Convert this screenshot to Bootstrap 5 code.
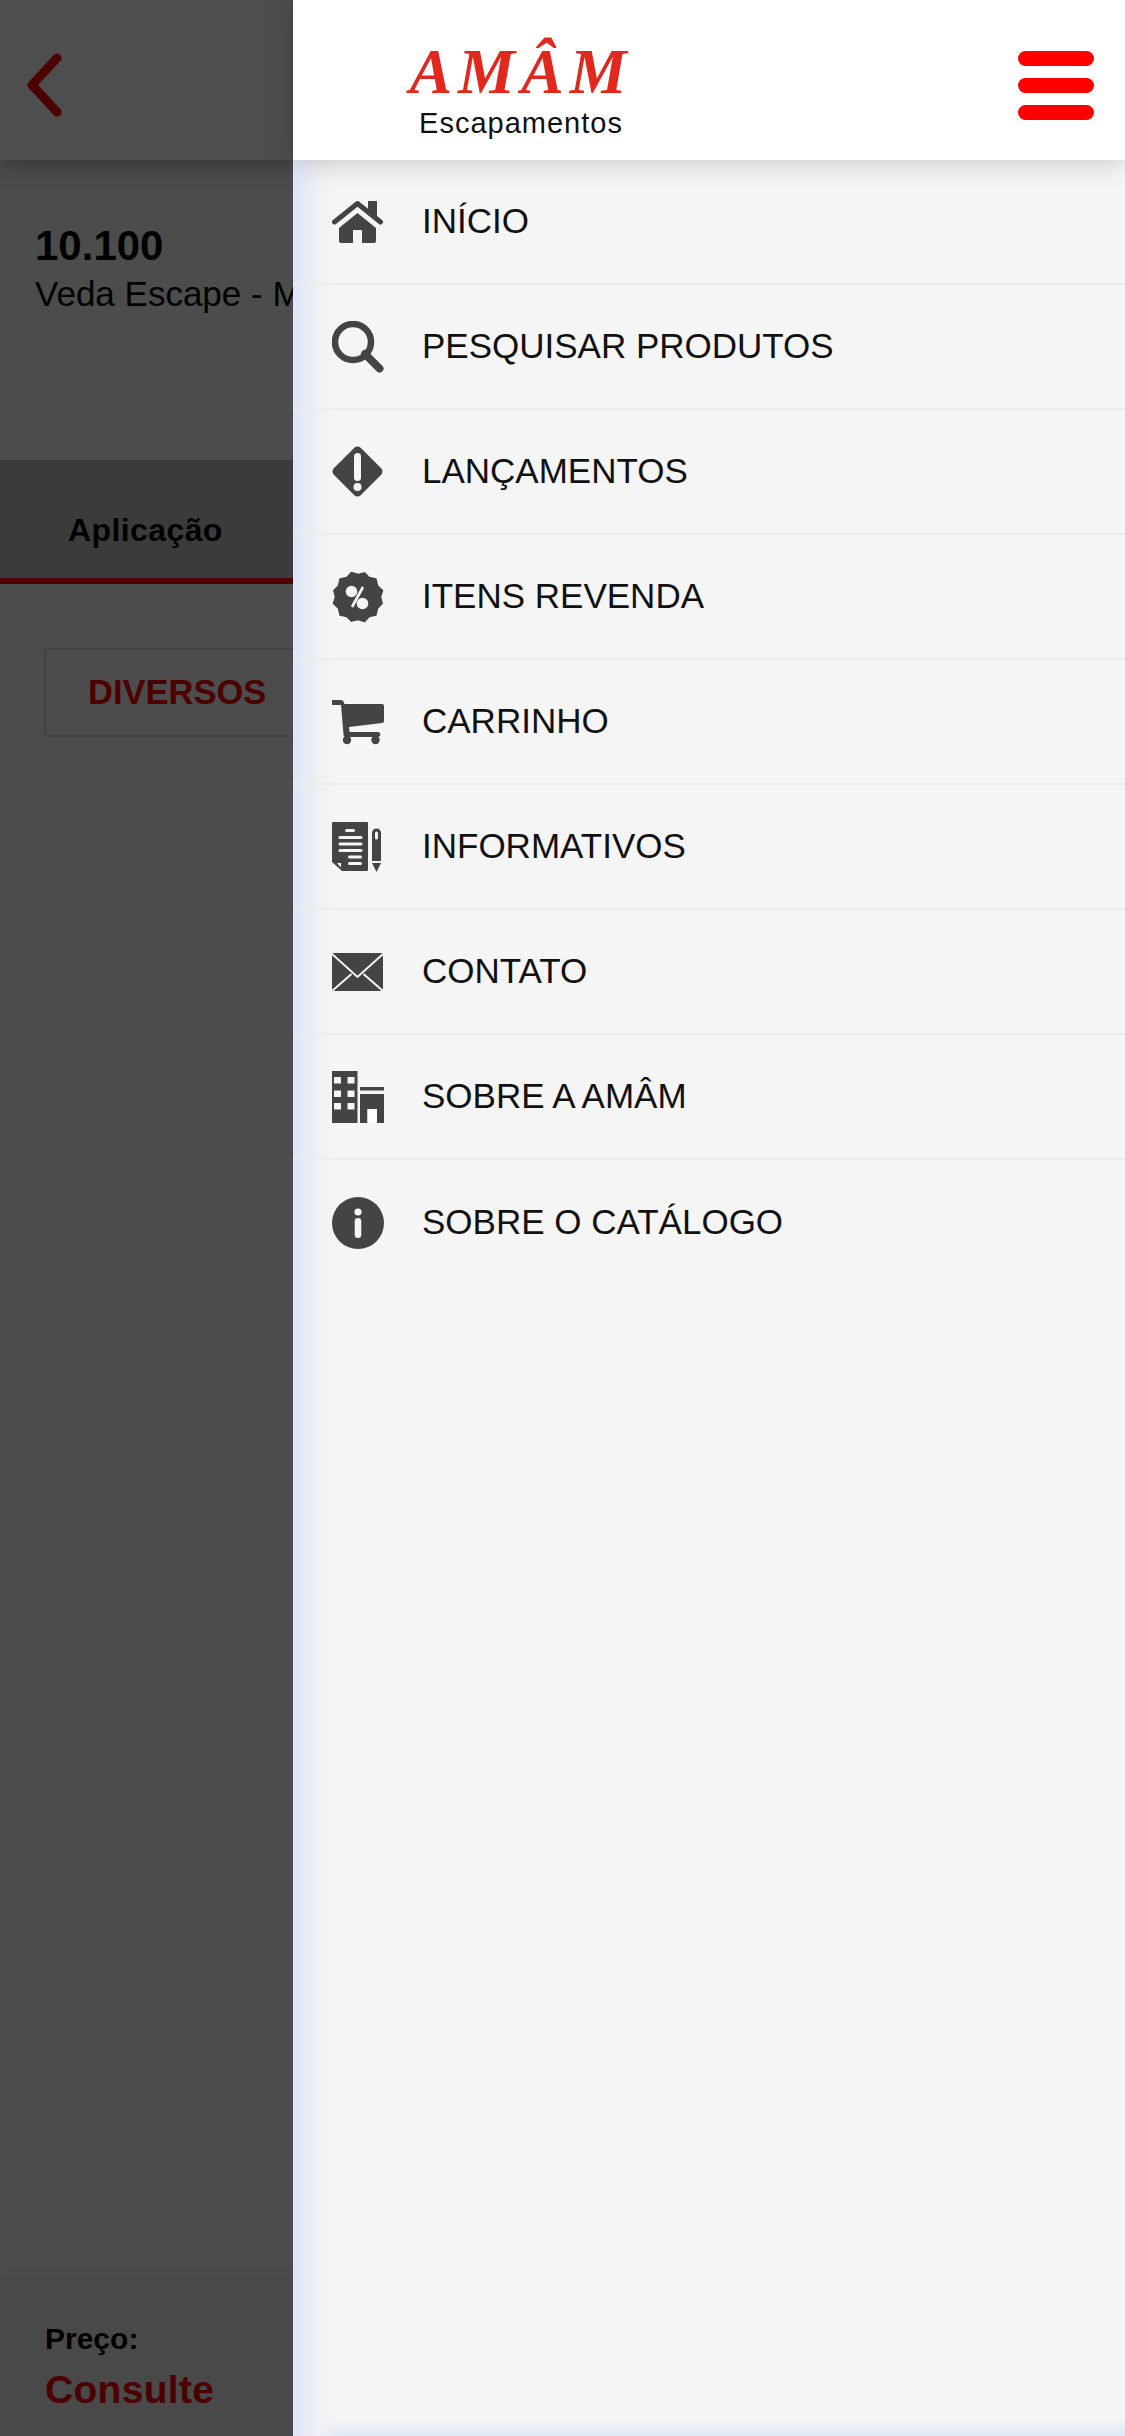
<!DOCTYPE html>
<html lang="pt-BR">

<head>
    <meta charset="UTF-8">
    <title>Amâm Escapamentos</title>
    <meta name="viewport" content="width=device-width, initial-scale=1.0">
    <link href="https://cdn.jsdelivr.net/npm/bootstrap@5.3.2/dist/css/bootstrap.min.css" rel="stylesheet">
    <style>
        body {
            font-family: "Liberation Sans", Arial, sans-serif;
            background-color: #4c4c4c;
            width: 1125px;
            height: 2436px;
            overflow: hidden;
        }

        .page-behind {
            width: 293px;
            height: 2436px;
            background-color: #4c4c4c;
            color: #000;
        }

        .behind-top {
            height: 160px;
            padding: 10px 0 0 26px;
            background-color: #4e4e4e;
            box-shadow: 0 6px 18px rgba(0, 0, 0, .25);
        }

        .product-info {
            height: 300px;
            padding: 64px 0 0 35px;
            white-space: nowrap;
        }

        .product-code {
            font-size: 42px;
            line-height: 44px;
            font-weight: 700;
        }

        .product-name {
            font-size: 35px;
            line-height: 52px;
        }

        .tab-bar {
            height: 124px;
            padding: 22px 0 0 68px;
            background-color: #3b3b3b;
            border-bottom: 6px solid #4d0000;
            font-size: 32px;
            font-weight: 700;
            letter-spacing: .4px;
            white-space: nowrap;
        }

        .chip-wrap {
            padding: 64px 0 0 44px;
        }

        .group-chip {
            width: 400px;
            height: 89px;
            padding-left: 42px;
            border: 2px solid #434343;
            color: #4d0000;
            font-size: 34.5px;
            font-weight: 700;
        }

        .price-bar {
            height: 153px;
            padding: 38px 0 0 45px;
            background-color: #494949;
            box-shadow: 0 -4px 12px rgba(0, 0, 0, .06);
        }

        .price-label {
            font-size: 30px;
            line-height: 36px;
            font-weight: 700;
        }

        .price-value {
            font-size: 39px;
            line-height: 66px;
            font-weight: 700;
            letter-spacing: .3px;
            color: #4d0000;
        }

        .side-drawer {
            width: 832px;
            height: 2436px;
        }

        .drawer-top {
            height: 160px;
            padding: 11px 31px 0 114px;
            background-color: #fff;
            box-shadow: 0 2px 26px rgba(0, 0, 0, .2);
            z-index: 2;
        }

        .brand-box {
            width: 228px;
            margin-top: 4px;
            text-align: center;
        }

        .brand-name {
            font-family: "Liberation Serif", "Times New Roman", serif;
            font-style: italic;
            font-weight: 700;
            font-size: 64px;
            line-height: 71px;
            letter-spacing: 6px;
            color: #e0281e;
        }

        .brand-sub {
            font-size: 29px;
            line-height: 32px;
            letter-spacing: 1px;
            color: #111;
        }

        .menu-toggle {
            width: 76px;
            gap: 12px;
        }

        .menu-toggle span {
            height: 15px;
            border-radius: 8px;
            background-color: #f00;
        }

        .drawer-body {
            background:
                linear-gradient(to right, #dee5f6, #f0f1f4 26px, rgba(245, 245, 245, 0) 44px),
                linear-gradient(to top, #e1e8f6, rgba(245, 245, 245, 0) 18px),
                #f5f5f5;
        }

        .drawer-list {
            --bs-list-group-bg: transparent;
        }

        .drawer-list .list-group-item {
            height: 125px;
            padding: 0 0 0 39px;
            gap: 38px;
            border-bottom: 2px solid #ececec;
            color: #111;
            font-size: 35px;
        }

        .menu-icon {
            flex: none;
            width: 52px;
            height: 52px;
            fill: #444;
        }
    </style>
</head>

<body>
    <div class="d-flex">
        <div class="page-behind d-flex flex-column flex-shrink-0 overflow-hidden">
            <div class="behind-top d-flex align-items-center">
                <svg width="38" height="66" viewBox="0 0 38 66">
                    <path d="M31 6 6 33l25 27" fill="none" stroke="#4d0000" stroke-width="9" stroke-linecap="round" stroke-linejoin="round"/>
                </svg>
            </div>
            <div class="product-info">
                <div class="product-code">10.100</div>
                <div class="product-name">Veda Escape - Massa</div>
            </div>
            <div class="tab-bar d-flex align-items-center">Aplicação</div>
            <div class="chip-wrap">
                <div class="group-chip d-flex align-items-center">DIVERSOS</div>
            </div>
            <div class="price-bar mt-auto">
                <div class="price-label">Preço:</div>
                <div class="price-value">Consulte</div>
            </div>
        </div>

        <div class="side-drawer d-flex flex-column">
            <div class="drawer-top d-flex align-items-center justify-content-between position-relative">
                <div class="brand-box">
                    <div class="brand-name">AMÂM</div>
                    <div class="brand-sub">Escapamentos</div>
                </div>
                <div class="menu-toggle d-flex flex-column">
                    <span></span>
                    <span></span>
                    <span></span>
                </div>
            </div>

            <div class="drawer-body flex-grow-1">
                <div class="list-group list-group-flush drawer-list">
                    <a href="#" class="list-group-item d-flex align-items-center">
                        <svg class="menu-icon" viewBox="0 0 52 52">
                            <path d="M36 5h9v18l-9-7z"/>
                            <path d="M25.500 17 44 32v13a2 2 0 0 1-2 2H30V34h-9v13H9a2 2 0 0 1-2-2V32z"/>
                            <path d="M2.500 26 25.500 7.500 48.500 26" fill="none" stroke="#444" stroke-width="5" stroke-linecap="round" stroke-linejoin="round"/>
                        </svg>
                        <span>INÍCIO</span>
                    </a>
                    <a href="#" class="list-group-item d-flex align-items-center">
                        <svg class="menu-icon" viewBox="0 0 52 52">
                            <circle cx="21" cy="21" r="18" fill="none" stroke="#444" stroke-width="6.500"/>
                            <path d="M33 33 47.500 47.500" stroke="#444" stroke-width="8" stroke-linecap="round"/>
                        </svg>
                        <span>PESQUISAR PRODUTOS</span>
                    </a>
                    <a href="#" class="list-group-item d-flex align-items-center">
                        <svg class="menu-icon" viewBox="0 0 52 52">
                            <path d="M25.500 5 46 25.500 25.500 46 5 25.500z" stroke="#444" stroke-width="9" stroke-linejoin="round"/>
                            <rect x="22" y="7" width="7" height="28" rx="3.500" fill="#f5f5f5"/>
                            <circle cx="25.500" cy="41" r="4" fill="#f5f5f5"/>
                        </svg>
                        <span>LANÇAMENTOS</span>
                    </a>
                    <a href="#" class="list-group-item d-flex align-items-center">
                        <svg class="menu-icon" viewBox="0 0 52 52">
                            <polygon transform="rotate(15 26 26)" stroke="#444" stroke-width="1.500" stroke-linejoin="round" points="51,26 47.700,31.800 48,38.700 41.900,41.900 38.700,48 31.800,47.700 26,51 20.200,47.700 13.300,48 10.100,41.900 4,38.700 4.300,31.800 1,26 4.300,20.200 4,13.300 10.100,10.100 13.300,4 20.200,4.300 26,1 31.800,4.300 38.700,4 41.900,10.100 48,13.300 47.700,20.200"/>
                            <circle cx="19.500" cy="20.500" r="5.800" fill="#f5f5f5"/>
                            <circle cx="30.500" cy="32.500" r="5.800" fill="#f5f5f5"/>
                            <path d="M31 16 20 36" stroke="#f5f5f5" stroke-width="2.600"/>
                        </svg>
                        <span>ITENS REVENDA</span>
                    </a>
                    <a href="#" class="list-group-item d-flex align-items-center">
                        <svg class="menu-icon" viewBox="0 0 52 52">
                            <path d="M1.500 4H9a3 3 0 0 1 3 2.500l.4 1.500H50a2 2 0 0 1 2 2v15a2 2 0 0 1-2 2L17 31l.6 5H46a2.500 2.500 0 0 1 0 5H14a2.500 2.500 0 0 1-2.500-2.500L9 9H1.500a2.500 2.500 0 0 1 0-5z"/>
                            <circle cx="15" cy="44" r="4.200"/>
                            <circle cx="43.500" cy="44" r="4.200"/>
                        </svg>
                        <span>CARRINHO</span>
                    </a>
                    <a href="#" class="list-group-item d-flex align-items-center">
                        <svg class="menu-icon" viewBox="0 0 52 52">
                            <path d="M1 1h34a1 1 0 0 1 1 1v47a1 1 0 0 1-1 1H10L0 41V2a1 1 0 0 1 1-1z"/>
                            <g fill="#f5f5f5">
                                <rect x="13" y="8" width="10" height="3" rx="1.500"/>
                                <rect x="6.500" y="15" width="24" height="3" rx="1.500"/>
                                <rect x="6.500" y="21.500" width="24" height="3" rx="1.500"/>
                                <rect x="6.500" y="28" width="24" height="3" rx="1.500"/>
                                <rect x="16" y="34.500" width="14" height="3" rx="1.500"/>
                                <rect x="16" y="41" width="14" height="3" rx="1.500"/>
                                <path d="M5 42h4v4.500z"/>
                            </g>
                            <path d="M40 12a4.500 4.500 0 0 1 9 0v28h-9z"/>
                            <rect x="43" y="10.500" width="3" height="8" rx="1.500" fill="#f5f5f5"/>
                            <path d="M40 42h9l-4.500 9z"/>
                        </svg>
                        <span>INFORMATIVOS</span>
                    </a>
                    <a href="#" class="list-group-item d-flex align-items-center">
                        <svg class="menu-icon" viewBox="0 0 52 52">
                            <rect x="0" y="7" width="51" height="38" rx="1.500"/>
                            <path d="M0 8 25.500 31 51 8M0 45l19.500-17M51 45 31.500 28" fill="none" stroke="#f5f5f5" stroke-width="2"/>
                        </svg>
                        <span>CONTATO</span>
                    </a>
                    <a href="#" class="list-group-item d-flex align-items-center">
                        <svg class="menu-icon" viewBox="0 0 52 52">
                            <path d="M0 0h25.500v52H0z"/>
                            <g fill="#f5f5f5">
                                <rect x="2" y="6" width="7" height="6.500"/>
                                <rect x="15.500" y="6" width="7" height="6.500"/>
                                <rect x="2" y="19.500" width="7" height="6.500"/>
                                <rect x="15.500" y="19.500" width="7" height="6.500"/>
                                <rect x="2" y="32" width="7" height="6.500"/>
                                <rect x="15.500" y="32" width="7" height="6.500"/>
                            </g>
                            <rect x="28" y="16" width="24" height="3.500"/>
                            <path d="M28 23h24v29h-7V38h-9.500v14H28z"/>
                            <rect x="35.500" y="38" width="9.500" height="14" fill="#fff"/>
                        </svg>
                        <span>SOBRE A AMÂM</span>
                    </a>
                    <a href="#" class="list-group-item d-flex align-items-center">
                        <svg class="menu-icon" viewBox="0 0 52 52">
                            <circle cx="26" cy="26" r="26"/>
                            <circle cx="26" cy="15" r="3.600" fill="#f5f5f5"/>
                            <rect x="22.700" y="21" width="6.600" height="20" rx="3.300" fill="#f5f5f5"/>
                        </svg>
                        <span>SOBRE O CATÁLOGO</span>
                    </a>
                </div>
            </div>
        </div>
    </div>

    <script src="https://cdn.jsdelivr.net/npm/bootstrap@5.3.2/dist/js/bootstrap.bundle.min.js"></script>
</body>

</html>
